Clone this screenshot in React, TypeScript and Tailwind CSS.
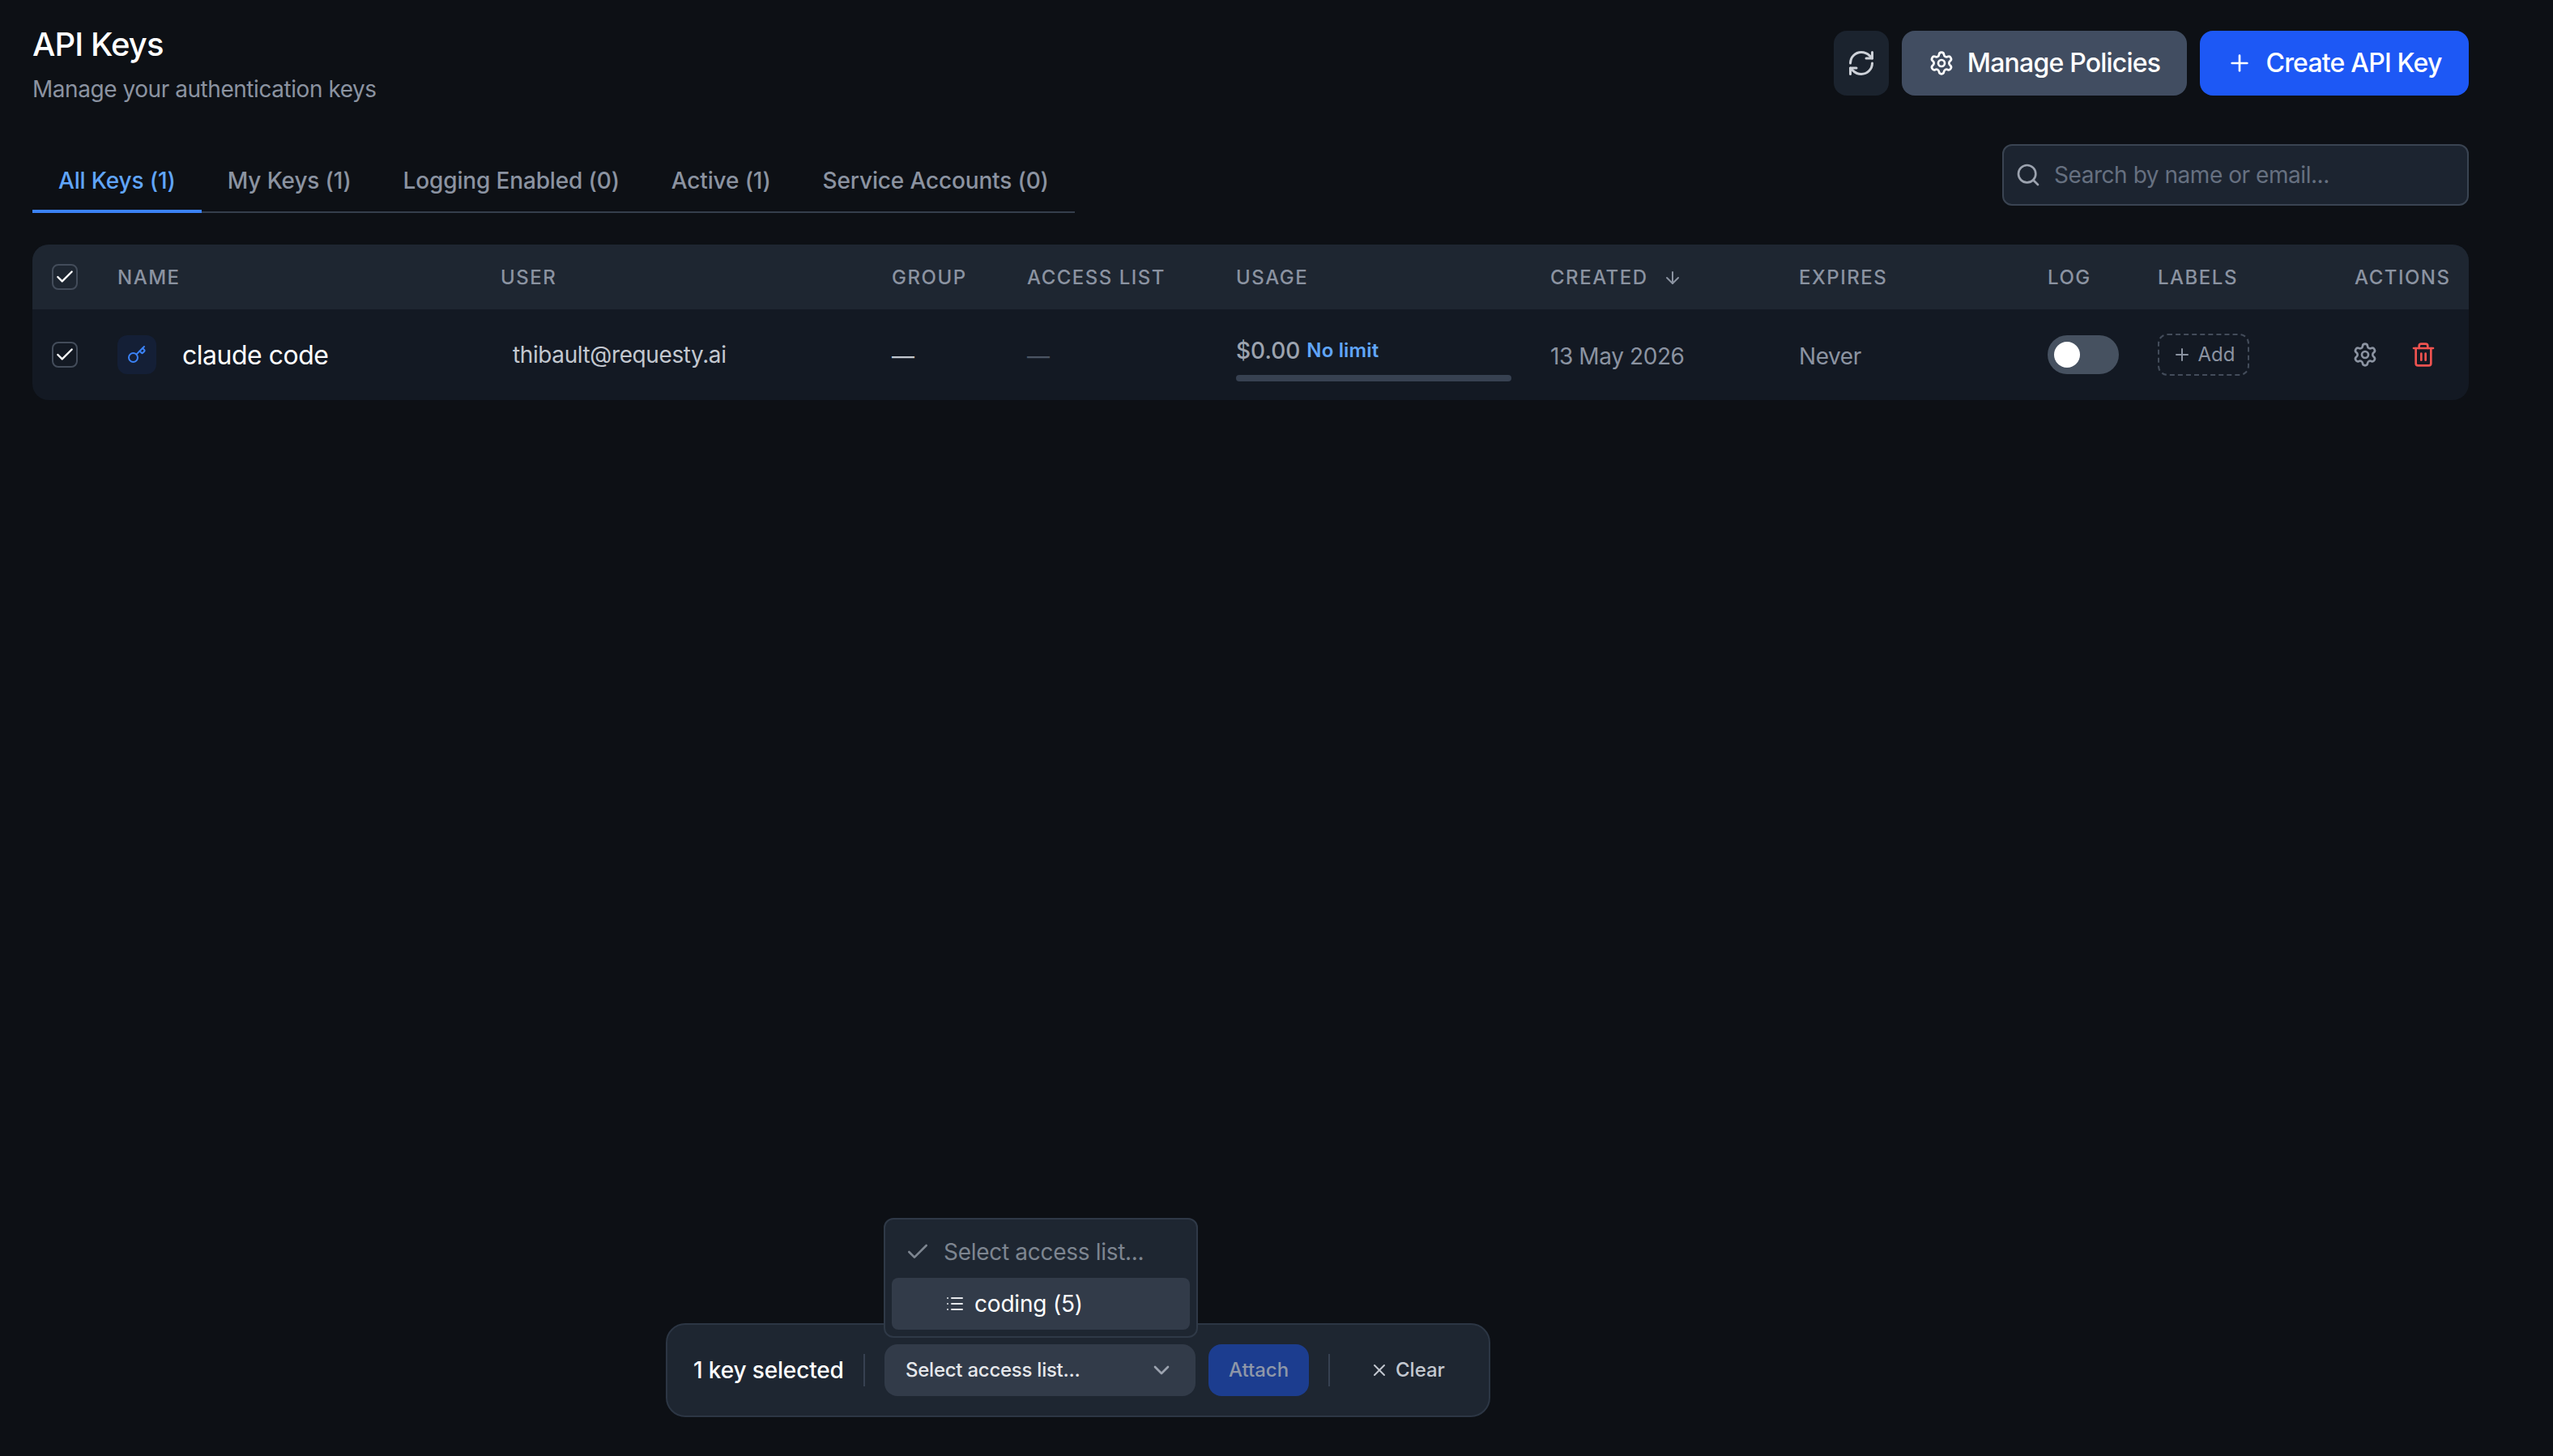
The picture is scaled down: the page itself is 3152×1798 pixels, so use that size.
import { Check, ChevronDown, ArrowDown, Key, List, Plus, RefreshCw, Search, Settings, Trash2, X } from "lucide-react";

const tabs = [
  { label: "All Keys (1)", active: true },
  { label: "My Keys (1)", active: false },
  { label: "Logging Enabled (0)", active: false },
  { label: "Active (1)", active: false },
  { label: "Service Accounts (0)", active: false },
];

function Box() {
  return (
    <span className="flex h-8 w-8 items-center justify-center rounded-lg border-2 border-[#434c5a] text-white">
      <Check size={26} strokeWidth={2.2} />
    </span>
  );
}

const th = "px-6 pt-px text-left text-2xl leading-8 font-medium tracking-[1.5px] text-[#8b93a1] uppercase";
const td = "px-6 align-middle";

export default function App() {
  return (
    <div className="relative min-h-screen bg-[#0d1015] pt-[27px] pr-[104px] pl-10 font-[Inter,sans-serif]">
      <header className="flex items-start justify-between">
        <div>
          <h1 className="text-[40px] leading-14 font-medium tracking-[-0.9px] text-white">API Keys</h1>
          <p className="mt-[7px] text-[28px] leading-10 tracking-[-0.45px] text-[#8b93a1]">Manage your authentication keys</p>
        </div>
        <div className="mt-[11px] flex gap-4">
          <button className="flex h-20 w-[68px] items-center justify-center rounded-2xl bg-[#1b232e] text-[#cdd1d8]">
            <RefreshCw size={36} strokeWidth={2} />
          </button>
          <button className="flex h-20 w-[352px] items-center justify-center gap-4 rounded-2xl bg-[#414d61] text-[32px] font-medium tracking-[-0.8px] text-white">
            <Settings size={32} strokeWidth={2} />
            Manage Policies
          </button>
          <button className="flex h-20 w-[332px] items-center justify-center gap-4 rounded-2xl bg-[#1d58f5] text-[32px] font-medium tracking-[-0.8px] text-white">
            <Plus size={32} strokeWidth={2} />
            Create API Key
          </button>
        </div>
      </header>

      <div className="mt-12 flex items-start justify-between">
        <nav className="flex border-b-2 border-[#353e4c] pt-[25px]">
          {tabs.map((t) => (
            <div
              key={t.label}
              className={
                t.active
                  ? "-mb-0.5 border-b-4 border-[#3b82f6] px-8 pb-4 text-[28px] leading-10 font-medium tracking-[-0.15px] text-[#60a5fa]"
                  : "px-8 pb-[18px] text-[28px] leading-10 font-medium tracking-[-0.15px] text-[#8b93a1]"
              }
            >
              {t.label}
            </div>
          ))}
        </nav>
        <label className="flex h-[76px] w-[576px] items-center gap-4 rounded-xl border-2 border-[#3a4452] bg-[#1c2430] pl-[14px]">
          <Search size={32} strokeWidth={2} className="text-[#9ca3af]" />
          <span className="text-[28px] tracking-[-0.45px] text-[#667080]">Search by name or email...</span>
        </label>
      </div>

      <div className="mt-[39px] overflow-hidden rounded-[20px] bg-[#131923]">
        <table className="w-full table-fixed border-collapse">
          <thead>
            <tr className="h-20 bg-[#1e2631]">
              <th className="w-[81px] px-6"><Box /></th>
              <th className={`w-[473px] ${th}`}>Name</th>
              <th className={`w-[483px] ${th}`}>User</th>
              <th className={`w-[167px] ${th}`}>Group</th>
              <th className={`w-[258px] ${th}`}>Access List</th>
              <th className={`w-[388px] ${th}`}>Usage</th>
              <th className={`w-[307px] ${th}`}>
                <span className="flex items-center gap-[18px]">Created <ArrowDown size={24} strokeWidth={2} /></span>
              </th>
              <th className={`w-[307px] ${th}`}>Expires</th>
              <th className={`w-[136px] ${th}`}>Log</th>
              <th className={`w-[243px] ${th}`}>Labels</th>
              <th className={`w-[165px] ${th}`}>Actions</th>
            </tr>
          </thead>
          <tbody>
            <tr className="h-28">
              <td className={td}><Box /></td>
              <td className={td}>
                <div className="flex items-center gap-8">
                  <span className="flex h-12 w-12 items-center justify-center rounded-xl bg-[#141f36] text-[#3b82f6]">
                    <Key size={24} strokeWidth={2} />
                  </span>
                  <span className="pt-0.5 text-[32px] tracking-[-0.5px] text-white">claude code</span>
                </div>
              </td>
              <td className={td}><span className="pl-[15px] text-[28px] tracking-[-0.4px] text-[#c3c8d0]">thibault@requesty.ai</span></td>
              <td className={`${td} pt-[3px] text-[28px] text-[#c3c8d0]`}>—</td>
              <td className={`${td} pt-[3px] text-[28px] text-[#4b5563]`}>—</td>
              <td className={`${td} pt-2`}>
                <div className="flex items-center gap-2 leading-10">
                  <span className="text-[28px] font-medium text-[#9ca3af]">$0.00</span>
                  <span className="text-2xl font-semibold tracking-[0.15px] text-[#60a5fa]">No limit</span>
                </div>
                <div className="mt-2.5 h-2 w-[340px] rounded-full bg-[#374151]" />
              </td>
              <td className={`${td} pt-[3px] text-[28px] tracking-[-0.4px] text-[#8b93a1]`}>13 May 2026</td>
              <td className={`${td} pt-[3px] text-[28px] tracking-[-0.4px] text-[#8b93a1]`}>Never</td>
              <td className={td}>
                <div className="flex h-12 w-[88px] items-center rounded-full bg-[#465160] pl-2">
                  <span className="h-8 w-8 rounded-full bg-white" />
                </div>
              </td>
              <td className={td}>
                <span className="flex h-[52px] w-[113px] items-center justify-center gap-2 rounded-xl border-2 border-dashed border-[#434c5a] text-2xl text-[#8b93a1]">
                  <Plus size={24} strokeWidth={2} />
                  Add
                </span>
              </td>
              <td className={td}>
                <div className="-ml-[3px] flex items-center gap-10">
                  <Settings size={32} strokeWidth={2} className="text-[#8b93a1]" />
                  <Trash2 size={32} strokeWidth={2} className="text-[#ef5350]" />
                </div>
              </td>
            </tr>
          </tbody>
        </table>
      </div>

      <div className="absolute top-[1634px] left-[822px] flex h-[116px] w-[1018px] items-center rounded-3xl border-2 border-[#2c3644] bg-[#1e2631] pl-8">
        <span className="w-[210px] text-[28px] font-medium tracking-[-0.15px] text-white">1 key selected</span>
        <span className="h-10 w-0.5 bg-[#374151]" />
        <div className="ml-6 flex h-16 w-[384px] items-center justify-between rounded-2xl bg-[#323b49] pr-[26px] pl-[26px] text-2xl font-medium tracking-[-0.25px] text-[#e5e7eb]">
          Select access list...
          <ChevronDown size={32} strokeWidth={2} className="text-[#9ca3af]" />
        </div>
        <button className="ml-4 h-16 w-[124px] rounded-2xl bg-[#1c3d8f] text-2xl font-medium text-[#8e97a8]">Attach</button>
        <span className="ml-6 h-10 w-0.5 bg-[#374151]" />
        <span className="ml-[49px] flex items-center gap-2 text-2xl font-medium text-[#c3c8d0]">
          <X size={24} strokeWidth={2} />
          Clear
        </span>
      </div>

      <div className="absolute top-[1504px] left-[1091px] w-[388px] rounded-xl border-2 border-[#2f3947] bg-[#1e2631] p-2">
        <div className="flex h-16 items-center gap-4 pl-4 text-[28px] tracking-[-0.3px] text-[#7d8590]">
          <Check size={32} strokeWidth={2} />
          Select access list...
        </div>
        <div className="flex h-16 items-center gap-3 rounded-lg bg-[#323b49] pl-[66px] text-[28px] tracking-[-0.2px] text-white">
          <List size={24} strokeWidth={2} className="text-[#e5e7eb]" />
          coding (5)
        </div>
      </div>
    </div>
  );
}
